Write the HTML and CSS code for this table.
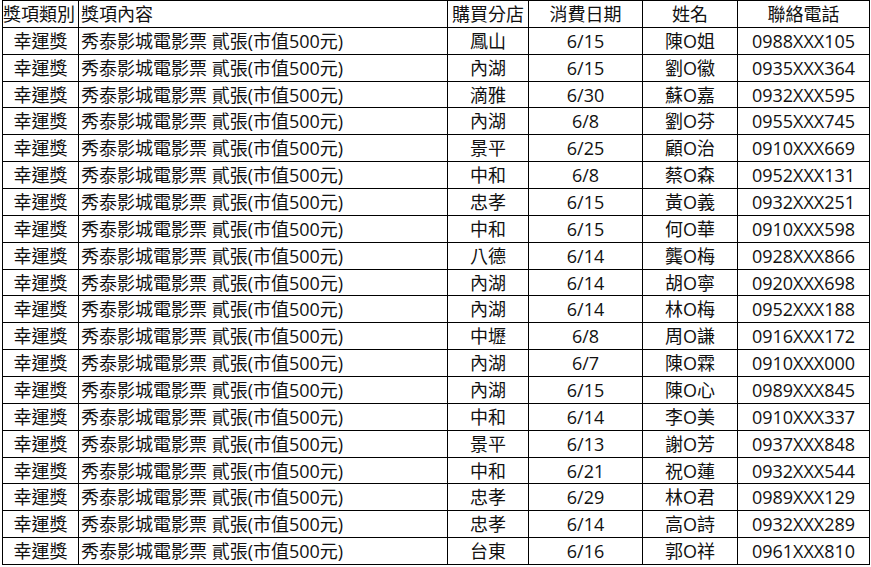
FILE: index.html
```html
<!DOCTYPE html>
<html lang="zh-Hant">
<head>
<meta charset="utf-8">
<title>得獎名單</title>
<link rel="stylesheet" href="styles.css">
</head>
<body>
<div class="wrap">
<table class="prize">
<colgroup>
<col class="c-type"><col class="c-item"><col class="c-store"><col class="c-date"><col class="c-name"><col class="c-phone">
</colgroup>
<thead>
<tr><th class="fit">獎項類別</th><th class="left">獎項內容</th><th>購買分店</th><th>消費日期</th><th>姓名</th><th>聯絡電話</th></tr>
</thead>
<tbody>
<tr><td>幸運獎</td><td class="left">秀泰影城電影票 貳張(市值500元)</td><td>鳳山</td><td>6/15</td><td>陳O姐</td><td>0988XXX105</td></tr>
<tr><td>幸運獎</td><td class="left">秀泰影城電影票 貳張(市值500元)</td><td>內湖</td><td>6/15</td><td>劉O徽</td><td>0935XXX364</td></tr>
<tr><td>幸運獎</td><td class="left">秀泰影城電影票 貳張(市值500元)</td><td>滴雅</td><td>6/30</td><td>蘇O嘉</td><td>0932XXX595</td></tr>
<tr><td>幸運獎</td><td class="left">秀泰影城電影票 貳張(市值500元)</td><td>內湖</td><td>6/8</td><td>劉O芬</td><td>0955XXX745</td></tr>
<tr><td>幸運獎</td><td class="left">秀泰影城電影票 貳張(市值500元)</td><td>景平</td><td>6/25</td><td>顧O治</td><td>0910XXX669</td></tr>
<tr><td>幸運獎</td><td class="left">秀泰影城電影票 貳張(市值500元)</td><td>中和</td><td>6/8</td><td>蔡O森</td><td>0952XXX131</td></tr>
<tr><td>幸運獎</td><td class="left">秀泰影城電影票 貳張(市值500元)</td><td>忠孝</td><td>6/15</td><td>黃O義</td><td>0932XXX251</td></tr>
<tr><td>幸運獎</td><td class="left">秀泰影城電影票 貳張(市值500元)</td><td>中和</td><td>6/15</td><td>何O華</td><td>0910XXX598</td></tr>
<tr><td>幸運獎</td><td class="left">秀泰影城電影票 貳張(市值500元)</td><td>八德</td><td>6/14</td><td>龔O梅</td><td>0928XXX866</td></tr>
<tr><td>幸運獎</td><td class="left">秀泰影城電影票 貳張(市值500元)</td><td>內湖</td><td>6/14</td><td>胡O寧</td><td>0920XXX698</td></tr>
<tr><td>幸運獎</td><td class="left">秀泰影城電影票 貳張(市值500元)</td><td>內湖</td><td>6/14</td><td>林O梅</td><td>0952XXX188</td></tr>
<tr><td>幸運獎</td><td class="left">秀泰影城電影票 貳張(市值500元)</td><td>中壢</td><td>6/8</td><td>周O謙</td><td>0916XXX172</td></tr>
<tr><td>幸運獎</td><td class="left">秀泰影城電影票 貳張(市值500元)</td><td>內湖</td><td>6/7</td><td>陳O霖</td><td>0910XXX000</td></tr>
<tr><td>幸運獎</td><td class="left">秀泰影城電影票 貳張(市值500元)</td><td>內湖</td><td>6/15</td><td>陳O心</td><td>0989XXX845</td></tr>
<tr><td>幸運獎</td><td class="left">秀泰影城電影票 貳張(市值500元)</td><td>中和</td><td>6/14</td><td>李O美</td><td>0910XXX337</td></tr>
<tr><td>幸運獎</td><td class="left">秀泰影城電影票 貳張(市值500元)</td><td>景平</td><td>6/13</td><td>謝O芳</td><td>0937XXX848</td></tr>
<tr><td>幸運獎</td><td class="left">秀泰影城電影票 貳張(市值500元)</td><td>中和</td><td>6/21</td><td>祝O蓮</td><td>0932XXX544</td></tr>
<tr><td>幸運獎</td><td class="left">秀泰影城電影票 貳張(市值500元)</td><td>忠孝</td><td>6/29</td><td>林O君</td><td>0989XXX129</td></tr>
<tr><td>幸運獎</td><td class="left">秀泰影城電影票 貳張(市值500元)</td><td>忠孝</td><td>6/14</td><td>高O詩</td><td>0932XXX289</td></tr>
<tr><td>幸運獎</td><td class="left">秀泰影城電影票 貳張(市值500元)</td><td>台東</td><td>6/16</td><td>郭O祥</td><td>0961XXX810</td></tr>
</tbody>
</table>
</div>
</body>
</html>
```
FILE: styles.css
```css
html, body {
  margin: 0;
  padding: 0;
  background: #fff;
}
.wrap {
  padding-left: 2px;
}
.prize {
  border-collapse: collapse;
  table-layout: fixed;
  width: 867px;
  font-family: "Open Sans", "Noto Sans CJK TC", sans-serif;
  font-size: 18px;
  color: #111;
}
.c-type { width: 76px; }
.c-item { width: 369px; }
.c-store { width: 81px; }
.c-date { width: 114px; }
.c-name { width: 95px; }
.c-phone { width: 132px; }
.prize th, .prize td {
  border: 1px solid #000;
  padding: 0;
  height: 25.86px;
  line-height: 20px;
  text-align: center;
  vertical-align: middle;
  font-weight: normal;
  white-space: nowrap;
  overflow: hidden;
}
.prize .left {
  text-align: left;
  padding-left: 2px;
}
.prize .fit {
  text-align: left;
  padding-left: 0;
}
```
